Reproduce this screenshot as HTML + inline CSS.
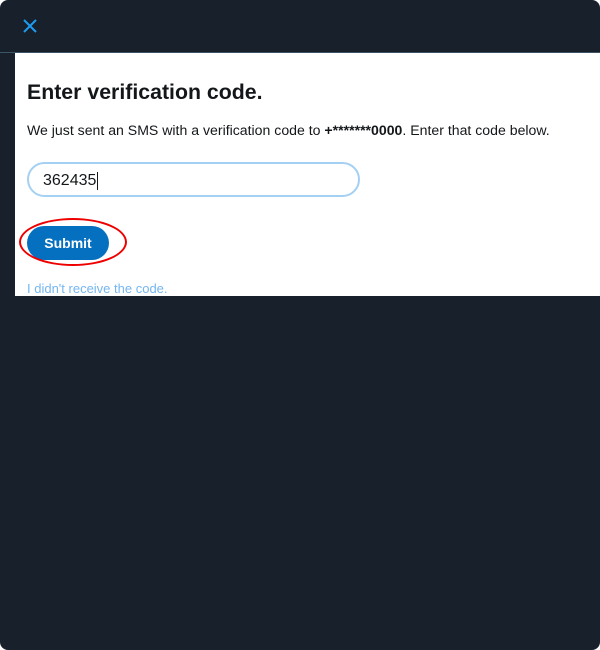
<!DOCTYPE html>
<html><head><style>
html,body{margin:0;padding:0;width:600px;height:650px;overflow:hidden;background:#fff;}
.wrap{position:absolute;left:0;top:0;width:600px;height:650px;background:#17202b;border-radius:8px;overflow:hidden;font-family:"Liberation Sans",Arial,sans-serif;}
.line{position:absolute;left:0;top:52px;width:600px;height:1px;background:#3d5466;}
.panel{position:absolute;left:15px;top:53px;width:585px;height:243px;background:#fff;}
h1{position:absolute;left:27px;top:80px;margin:0;font-size:21.3px;font-weight:bold;color:#14171a;}
p{position:absolute;left:27px;top:122px;margin:0;font-size:14.1px;color:#14171a;}
.inp{position:absolute;left:27px;top:162px;width:329px;height:31px;border:2px solid #a4d0f3;border-radius:18px;background:#fff;}
.inp span{position:absolute;left:14px;top:8px;font-size:16px;color:#14171a;border-right:1px solid #14171a;padding-right:1px;line-height:18px;}
.btn{position:absolute;left:27px;top:226px;width:82px;height:34px;border-radius:17px;background:#0670c0;color:#fff;font-weight:bold;font-size:14px;text-align:center;line-height:34px;}
.ell{position:absolute;left:19px;top:218px;width:104px;height:44px;border:2px solid #e00;border-radius:50%;}
a{position:absolute;left:27px;top:281px;font-size:13px;color:#74b6ef;text-decoration:none;}
</style></head><body>
<div class="wrap">
<svg style="position:absolute;left:22px;top:18px" width="16" height="16" viewBox="0 0 16 16"><path d="M2 2L14 14M14 2L2 14" stroke="#1d9bf0" stroke-width="2"/></svg>
<div class="line"></div>
<div class="panel"></div>
<h1>Enter verification code.</h1>
<p>We just sent an SMS with a verification code to <b>+*******0000</b>. Enter that code below.</p>
<div class="inp"><span>362435</span></div>
<div class="btn">Submit</div>
<div class="ell"></div>
<a>I didn't receive the code.</a>
</div>
</body></html>
